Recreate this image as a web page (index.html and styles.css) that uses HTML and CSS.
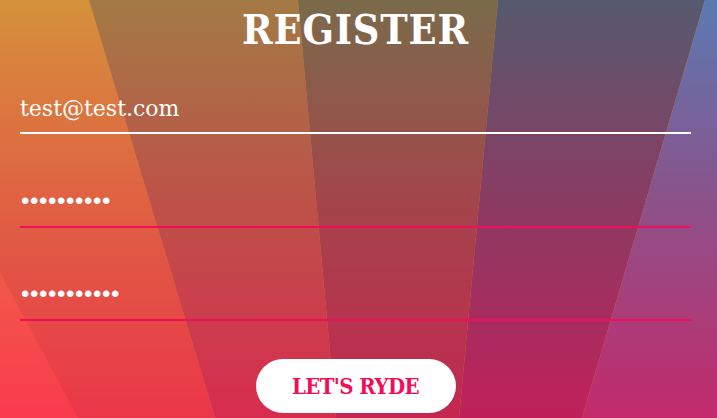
FILE: index.html
```html
<!DOCTYPE html>
<html lang="en">
<head>
<meta charset="utf-8">
<title>Register</title>
<link rel="stylesheet" href="styles.css">
</head>
<body>
<svg class="rays" viewBox="0 0 717 418" preserveAspectRatio="none" aria-hidden="true">
  <defs>
    <linearGradient id="g0" gradientUnits="userSpaceOnUse" x1="0" y1="0" x2="0" y2="418">
      <stop offset="0" stop-color="#e39a3e"/>
      <stop offset="0.5" stop-color="#ee6648"/>
      <stop offset="1" stop-color="#fa3a4e"/>
    </linearGradient>
    <linearGradient id="g1" gradientUnits="userSpaceOnUse" x1="0" y1="0" x2="0" y2="418">
      <stop offset="0" stop-color="#a37a45"/>
      <stop offset="0.5" stop-color="#be5049"/>
      <stop offset="1" stop-color="#d82c4f"/>
    </linearGradient>
    <linearGradient id="g2" gradientUnits="userSpaceOnUse" x1="0" y1="0" x2="0" y2="418">
      <stop offset="0" stop-color="#7a6b4a"/>
      <stop offset="0.5" stop-color="#a5444b"/>
      <stop offset="1" stop-color="#c42650"/>
    </linearGradient>
    <linearGradient id="g3" gradientUnits="userSpaceOnUse" x1="0" y1="0" x2="0" y2="418">
      <stop offset="0" stop-color="#565a6e"/>
      <stop offset="0.5" stop-color="#8c3a62"/>
      <stop offset="1" stop-color="#c0205a"/>
    </linearGradient>
    <linearGradient id="g4" gradientUnits="userSpaceOnUse" x1="0" y1="0" x2="0" y2="418">
      <stop offset="0" stop-color="#5a7ab2"/>
      <stop offset="0.5" stop-color="#8e5088"/>
      <stop offset="1" stop-color="#c42a6c"/>
    </linearGradient>
  </defs>
  <polygon points="0,0 89,0 215,418 0,418" fill="url(#g0)"/>
  <polygon points="-146,0 89,0 215,418 78,418" fill="#000" fill-opacity="0.06"/>
  <polygon points="89,0 298,0 336,418 215,418" fill="url(#g1)"/>
  <polygon points="298,0 498,0 459,418 336,418" fill="url(#g2)"/>
  <polygon points="498,0 705,0 582,418 459,418" fill="url(#g3)"/>
  <polygon points="705,0 717,0 717,418 582,418" fill="url(#g4)"/>
</svg>

<main class="register">
  <h1 class="title">REGISTER</h1>
  <form class="form">
    <label class="field field-active">
      <input class="input" type="email" value="test@test.com" aria-label="Email">
    </label>
    <label class="field field-pass">
      <input class="input input-pass" type="password" value="abcdefghij" aria-label="Password">
    </label>
    <label class="field field-pass field-last">
      <input class="input input-pass" type="password" value="abcdefghijk" aria-label="Confirm password">
    </label>
    <div class="actions">
      <button class="btn" type="button">LET'S RYDE</button>
    </div>
  </form>
</main>
</body>
</html>
```
FILE: styles.css
```css
html, body {
  margin: 0;
  padding: 0;
}

body {
  position: relative;
  width: 717px;
  height: 418px;
  overflow: hidden;
  background: #d8903a;
  font-family: "DejaVu Serif", serif;
}

.rays {
  position: absolute;
  left: 0;
  top: 0;
  width: 717px;
  height: 418px;
  z-index: 0;
}

.register {
  position: relative;
  z-index: 1;
  display: flex;
  flex-direction: column;
  padding: 6px 26px 0 20px;
}

.title {
  margin: 0;
  text-align: center;
  color: #ffffff;
  font-family: "DejaVu Serif Condensed", "DejaVu Serif", serif;
  font-weight: bold;
  font-size: 41px;
  line-height: 48px;
  letter-spacing: 0.8px;
}

.form {
  display: flex;
  flex-direction: column;
  margin-top: 36px;
}

.field {
  display: block;
  padding-bottom: 6px;
  border-bottom: 2px solid #f20d58;
}

.field-active {
  border-bottom-color: #ffffff;
}

.field-pass {
  margin-top: 50px;
}

.field-last {
  margin-top: 49px;
}

.input {
  display: block;
  width: 100%;
  height: 36px;
  margin: 0;
  padding: 0;
  border: 0;
  outline: none;
  background: transparent;
  color: #ffffff;
  font-family: "DejaVu Serif", serif;
  font-size: 22px;
}

.input-pass {
  height: 34px;
  padding-bottom: 2px;
  box-sizing: content-box;
  font-family: "Liberation Sans", sans-serif;
  font-size: 24px;
  letter-spacing: 0.6px;
  padding-left: 1px;
}

.actions {
  display: flex;
  justify-content: center;
  margin-top: 38px;
}

.btn {
  width: 200px;
  height: 54px;
  border: 0;
  border-radius: 27px;
  background: #ffffff;
  color: #f20d58;
  font-family: "DejaVu Serif Condensed", "DejaVu Serif", serif;
  font-weight: bold;
  font-size: 22px;
  letter-spacing: -0.6px;
  padding: 0;
  cursor: pointer;
}
```
